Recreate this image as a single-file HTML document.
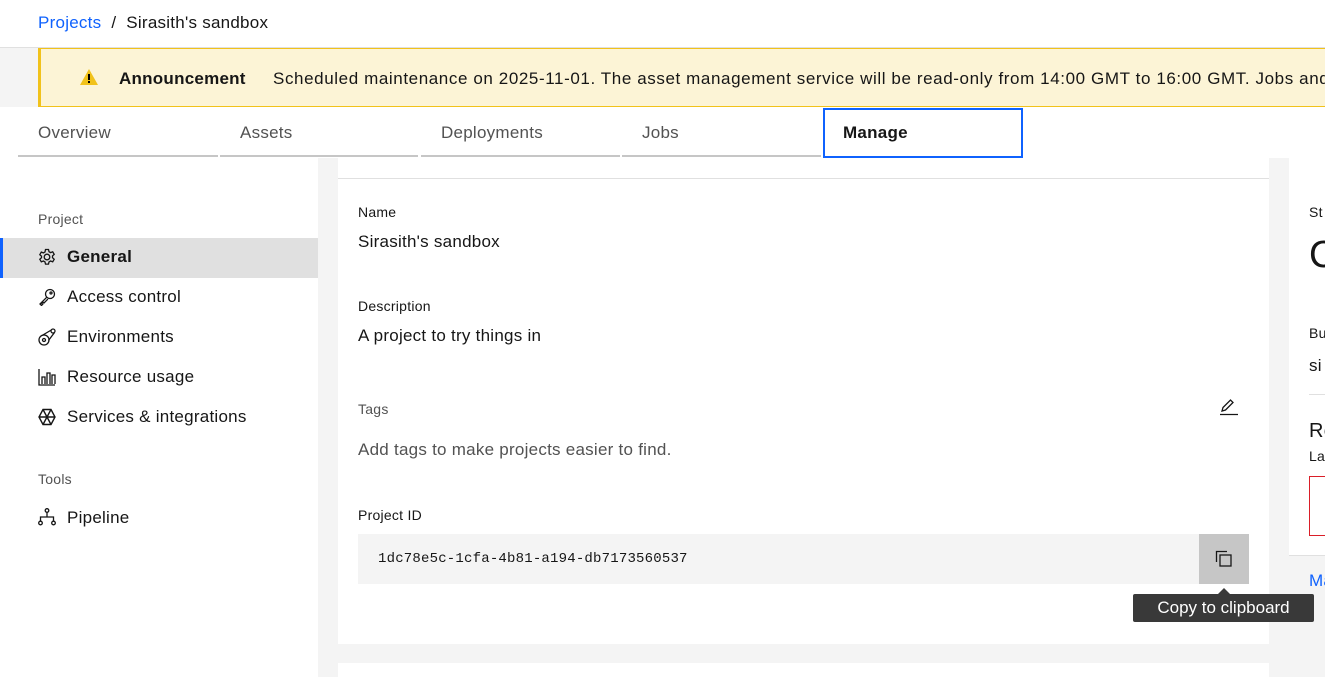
<!DOCTYPE html>
<html><head><style>
*{box-sizing:border-box;margin:0;padding:0}
body{width:1325px;height:677px;overflow:hidden;font-family:"Liberation Sans",sans-serif;color:#161616;background:#fff;position:relative;letter-spacing:0.25px}
.a{position:absolute;white-space:nowrap}
.lbl{font-size:14px;color:#161616}
.val{font-size:17px}
.nav{font-size:17px;left:67px}
.ico{position:absolute;left:38px}
</style></head><body>
<div class="a" style="left:38px;top:13px;font-size:17px"><span style="color:#0f62fe">Projects</span>&nbsp;&nbsp;/&nbsp;&nbsp;Sirasith's sandbox</div>
<div class="a" style="left:0;top:47px;width:1325px;height:1px;background:#e0e0e0"></div>
<div class="a" style="left:0;top:48px;width:38px;height:59px;background:#f4f4f4"></div>
<div class="a" style="left:38px;top:48px;width:1287px;height:59px;background:#fcf4d6;border:1px solid #f1c21b;border-left:3px solid #f1c21b;border-right:none"></div>
<svg class="a" style="left:79px;top:68px" width="20" height="18" viewBox="0 0 20 18"><path d="M10 1L19 17H1Z" fill="#f1c21b"/><rect x="9" y="6" width="2" height="6" fill="#000"/><rect x="9" y="13" width="2" height="2" fill="#000"/></svg>
<div class="a" style="left:119px;top:69px;font-size:17px;font-weight:bold">Announcement</div>
<div class="a" style="left:273px;top:69px;font-size:17px;letter-spacing:0.6px">Scheduled maintenance on 2025-11-01. The asset management service will be read-only from 14:00 GMT to 16:00 GMT. Jobs and</div>
<div class="a" style="left:38px;top:123px;font-size:17px;color:#525252">Overview</div>
<div class="a" style="left:240px;top:123px;font-size:17px;color:#525252">Assets</div>
<div class="a" style="left:441px;top:123px;font-size:17px;color:#525252">Deployments</div>
<div class="a" style="left:642px;top:123px;font-size:17px;color:#525252">Jobs</div>
<div class="a" style="left:18px;top:155px;width:200px;height:2px;background:#c6c6c6"></div>
<div class="a" style="left:220px;top:155px;width:198px;height:2px;background:#c6c6c6"></div>
<div class="a" style="left:421px;top:155px;width:199px;height:2px;background:#c6c6c6"></div>
<div class="a" style="left:622px;top:155px;width:199px;height:2px;background:#c6c6c6"></div>
<div class="a" style="left:823px;top:108px;width:200px;height:50px;border:2px solid #0f62fe"></div>
<div class="a" style="left:843px;top:123px;font-size:17px;font-weight:bold">Manage</div>

<div class="a" style="left:318px;top:158px;width:1007px;height:519px;background:#f4f4f4"></div>
<div class="a" style="left:338px;top:158px;width:931px;height:486px;background:#fff"></div>
<div class="a" style="left:338px;top:178px;width:931px;height:1px;background:#e0e0e0"></div>
<div class="a" style="left:338px;top:663px;width:931px;height:14px;background:#fff"></div>
<div class="a" style="left:1289px;top:158px;width:36px;height:398px;background:#fff"></div>

<div class="a" style="left:38px;top:211px;font-size:14px;color:#525252">Project</div>
<div class="a" style="left:0;top:238px;width:318px;height:40px;background:#e0e0e0;border-left:3px solid #0f62fe"></div>
<svg class="ico" style="top:248px" width="18" height="18" viewBox="0 0 18 18" fill="none" stroke="#161616" stroke-width="1.3"><circle cx="9" cy="9" r="2.8"/><path d="M7.5 1.5h3l.5 2.2 1.6.9 2.1-.8 1.5 2.6-1.7 1.5v1.8l1.7 1.5-1.5 2.6-2.1-.8-1.6.9-.5 2.2h-3l-.5-2.2-1.6-.9-2.1.8-1.5-2.6 1.7-1.5V8.2L1.8 6.7l1.5-2.6 2.1.8 1.6-.9z"/></svg>
<div class="a nav" style="top:247px;font-weight:bold">General</div>
<svg class="ico" style="top:288px" width="18" height="18" viewBox="0 0 18 18" fill="none" stroke="#161616" stroke-width="1.3"><circle cx="12" cy="6" r="4.5"/><circle cx="13" cy="5" r="1"/><path d="M8.8 9.2L2 16l1.5 1.5 1.2-1.2-1-1 1.2-1.2 1 1 4-4"/></svg>
<div class="a nav" style="top:287px">Access control</div>
<svg class="ico" style="top:328px" width="18" height="18" viewBox="0 0 18 18" fill="none" stroke="#161616" stroke-width="1.3"><circle cx="6" cy="12" r="5"/><circle cx="6" cy="12" r="1.5"/><circle cx="15" cy="3" r="2"/><path d="M4 7.5L13.3 2M10.5 12.5L16.5 4.5"/></svg>
<div class="a nav" style="top:327px">Environments</div>
<svg class="ico" style="top:368px" width="18" height="18" viewBox="0 0 18 18" fill="none" stroke="#161616" stroke-width="1.3"><path d="M1 1v16h16M4 16V9h3v7M9 16V5h3v11M14 16V7h3v9"/></svg>
<div class="a nav" style="top:367px">Resource usage</div>
<svg class="ico" style="top:408px" width="18" height="18" viewBox="0 0 18 18" fill="none" stroke="#161616" stroke-width="1.4"><path d="M5 1.5h8l4 7.5-4 7.5H5L1 9z M1 9h16 M5 1.5l8 15 M13 1.5l-8 15"/></svg>
<div class="a nav" style="top:407px">Services &amp; integrations</div>
<div class="a" style="left:38px;top:471px;font-size:14px;color:#525252">Tools</div>
<svg class="ico" style="top:508px" width="18" height="18" viewBox="0 0 18 18" fill="none" stroke="#161616" stroke-width="1.3"><circle cx="9" cy="2.5" r="1.8"/><circle cx="2.5" cy="15" r="1.8"/><circle cx="15.5" cy="15" r="1.8"/><path d="M9 4.3V9M2.5 13.2V9h13v4.2"/></svg>
<div class="a nav" style="top:508px">Pipeline</div>

<div class="a lbl" style="left:358px;top:204px">Name</div>
<div class="a val" style="left:358px;top:232px">Sirasith's sandbox</div>
<div class="a lbl" style="left:358px;top:298px">Description</div>
<div class="a val" style="left:358px;top:326px">A project to try things in</div>
<div class="a lbl" style="left:358px;top:401px;color:#525252">Tags</div>
<svg class="a" style="left:1219px;top:398px" width="20" height="18" viewBox="0 0 20 18" fill="none" stroke="#161616" stroke-width="1.3"><path d="M3 13l1-3.5 7.5-7.5 2.5 2.5-7.5 7.5z M1 16.5h18"/></svg>
<div class="a val" style="left:358px;top:440px;color:#525252">Add tags to make projects easier to find.</div>
<div class="a lbl" style="left:358px;top:507px">Project ID</div>
<div class="a" style="left:358px;top:534px;width:891px;height:50px;background:#f4f4f4"></div>
<div class="a" style="left:378px;top:551px;font-family:'Liberation Mono',monospace;font-size:14px;letter-spacing:0.2px">1dc78e5c-1cfa-4b81-a194-db7173560537</div>
<div class="a" style="left:1199px;top:534px;width:50px;height:50px;background:#c6c6c6"></div>
<svg class="a" style="left:1215px;top:550px" width="18" height="18" viewBox="0 0 18 18" fill="none" stroke="#161616" stroke-width="1.3"><rect x="5" y="5" width="11" height="11"/><path d="M1.5 12V1.5H12"/></svg>
<div class="a" style="left:1218px;top:588px;width:0;height:0;border-left:6px solid transparent;border-right:6px solid transparent;border-bottom:6px solid #393939"></div>
<div class="a" style="left:1133px;top:594px;width:181px;height:28px;background:#393939;border-radius:2px;color:#fff;font-size:17px;text-align:center;line-height:28px;letter-spacing:0">Copy to clipboard</div>

<div class="a" style="left:1309px;top:204px;font-size:14px">St</div>
<div class="a" style="left:1309px;top:234px;font-size:38px;font-weight:300">C</div>
<div class="a" style="left:1309px;top:325px;font-size:14px">Bu</div>
<div class="a" style="left:1309px;top:356px;font-size:17px">si</div>
<div class="a" style="left:1309px;top:394px;width:16px;height:1px;background:#e0e0e0"></div>
<div class="a" style="left:1309px;top:420px;font-size:20px">Re</div>
<div class="a" style="left:1309px;top:448px;font-size:14px">La</div>
<div class="a" style="left:1309px;top:476px;width:20px;height:60px;border:1px solid #da1e28;border-right:none"></div>
<div class="a" style="left:1289px;top:555px;width:36px;height:1px;background:#e0e0e0"></div>
<div class="a" style="left:1309px;top:571px;font-size:17px;color:#0f62fe">Ma</div>
</body></html>
